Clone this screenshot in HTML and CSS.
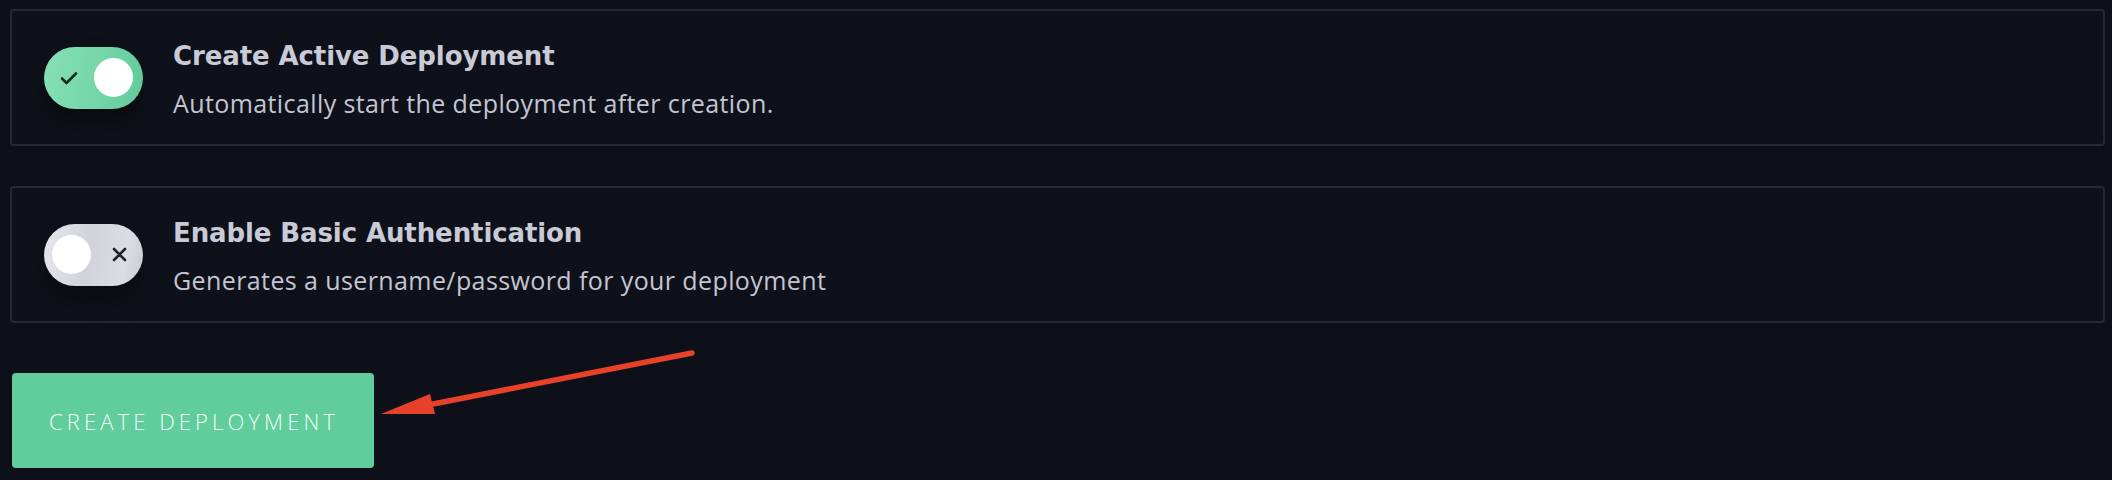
FILE: index.html
```html
<!DOCTYPE html>
<html>
<head>
<meta charset="utf-8">
<link rel="stylesheet" href="styles.css">
</head>
<body>
<div class="page">
  <div class="card">
    <div class="toggle toggle-on">
      <svg class="icon-check" width="18" height="14" viewBox="0 0 18 14"><path d="M2 7.5 L6.5 12 L16 2.5" fill="none" stroke="#1b2a24" stroke-width="2.6" stroke-linecap="round" stroke-linejoin="round"/></svg>
      <span class="knob"></span>
    </div>
    <div class="text">
      <div class="title">Create Active Deployment</div>
      <div class="desc">Automatically start the deployment after creation.</div>
    </div>
  </div>
  <div class="card card-second">
    <div class="toggle toggle-off">
      <span class="knob"></span>
      <svg class="icon-x" width="15" height="15" viewBox="0 0 15 15"><path d="M2 2 L13 13 M13 2 L2 13" fill="none" stroke="#22232a" stroke-width="2.6" stroke-linecap="round"/></svg>
    </div>
    <div class="text">
      <div class="title">Enable Basic Authentication</div>
      <div class="desc">Generates a username/password for your deployment</div>
    </div>
  </div>
  <button class="btn">CREATE DEPLOYMENT</button>
</div>
<svg class="arrow" width="2112" height="480" viewBox="0 0 2112 480">
  <line x1="692" y1="353" x2="428" y2="405" stroke="#e8412a" stroke-width="5.5" stroke-linecap="round"/>
  <polygon points="381,414 430,394 435,414" fill="#e8412a"/>
</svg>
</body>
</html>
```

FILE: styles.css
```css
html, body {
  margin: 0;
  padding: 0;
  background: #0e1019;
}
body {
  width: 2112px;
  height: 480px;
  overflow: hidden;
  position: relative;
}
.page {
  padding: 9px 7px 0 10px;
  display: flex;
  flex-direction: column;
}
.card {
  box-sizing: border-box;
  height: 137px;
  border: 2px solid #272932;
  border-radius: 4px;
  display: flex;
  align-items: center;
  padding-left: 32px;
  gap: 30px;
  background: #0e1119;
}
.card-second {
  margin-top: 40px;
}
.toggle {
  box-sizing: border-box;
  width: 99px;
  height: 62px;
  border-radius: 31px;
  display: flex;
  align-items: center;
  justify-content: space-between;
  box-shadow: 0 14px 22px rgba(0, 0, 0, 0.35);
  flex-shrink: 0;
}
.toggle-on {
  background: linear-gradient(100deg, #86e0b7 0%, #74d6a9 55%, #62c99b 100%);
  padding: 0 10px 0 16px;
}
.toggle-off {
  background: linear-gradient(100deg, #e6e7ec 0%, #d2d3da 45%, #dcdde3 80%, #c9cad2 100%);
  padding: 0 16px 0 8px;
}
.knob {
  width: 39px;
  height: 39px;
  border-radius: 50%;
  background: #ffffff;
  display: block;
}
.toggle-on .knob {
  margin-top: -1px;
}
.text {
  display: flex;
  flex-direction: column;
  margin-top: 4px;
}
.title {
  font-family: "DejaVu Sans", Lato, sans-serif;
  font-weight: 700;
  font-size: 26px;
  line-height: 30px;
  color: #c9cad8;
  letter-spacing: -0.1px;
}
.desc {
  font-family: "Open Sans", "Liberation Sans", sans-serif;
  font-weight: 400;
  font-size: 25px;
  line-height: 30px;
  color: #c4c5d2;
  letter-spacing: 0.4px;
  margin-top: 17px;
}
.btn {
  margin-top: 50px;
  margin-left: 2px;
  width: 362px;
  height: 95px;
  border: none;
  border-radius: 4px;
  background: #61cc9c;
  color: #f0fff8;
  font-family: "Open Sans", "Liberation Sans", sans-serif;
  font-weight: 300;
  font-size: 22px;
  letter-spacing: 4.1px;
  padding: 0 0 0 2px;
  align-self: flex-start;
}
.arrow {
  position: absolute;
  left: 0;
  top: 0;
  pointer-events: none;
}
```
